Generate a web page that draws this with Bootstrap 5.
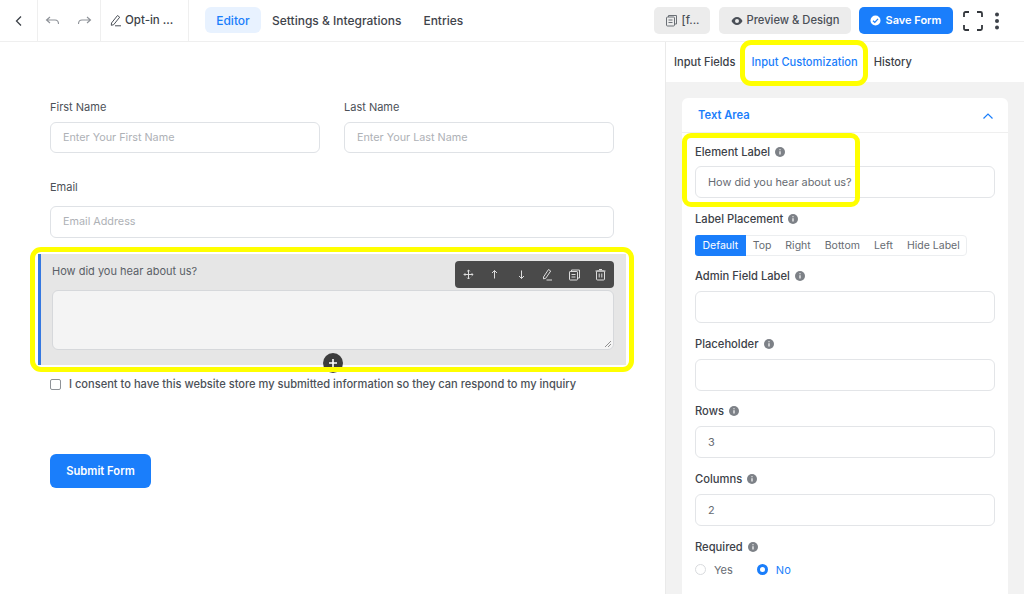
<!DOCTYPE html>
<html lang="en">
<head>
  <meta charset="UTF-8" />
  <meta name="viewport" content="width=device-width, initial-scale=1" />
  <title>Form Editor</title>
  <link href="https://cdn.jsdelivr.net/npm/bootstrap@5.3.0/dist/css/bootstrap.min.css" rel="stylesheet" />
  <style>
    html, body { height: 594px; overflow: hidden; }
    body { font-family: Inter, "Liberation Sans", sans-serif; font-size: 11px; color: #4a4f57; background: #fff; }
    svg { display: block; flex-shrink: 0; }
    .top-bar { height: 42px; border-bottom: 1px solid #efefef; }
    .top-cell { height: 41px; border-right: 1px solid #efefef; }
    .cell-back { width: 38px; }
    .cell-undo { width: 63px; gap: 17px; padding-left: 7px; }
    .cell-title { width: 88px; padding-left: 9px; gap: 3px; font-size: 11.5px; font-weight: 500; color: #3c4148; }
    .top-nav { margin-left: 16px; font-size: 12px; font-weight: 500; color: #3f444b; }
    .top-nav .nav-on { background: #e8f2ff; color: #1a7efb; border-radius: 6px; height: 26px; width: 56px; margin: -1px 11px 0 0; display: flex; align-items: center; justify-content: center; padding-top: 1px; }
    .top-nav .nav-mid { margin-right: 22px; }
    .top-right { gap: 9px; padding-right: 20px; }
    .grey-btn { height: 27px; background: #ececec; color: #4a4f57; border-radius: 5px; font-size: 11.2px; font-weight: 500; gap: 4px; }
    .btn-file { width: 56px; }
    .btn-prev { width: 132px; }
    .btn-save { width: 94px; height: 27px; background: #1a7efb; color: #fff; border-radius: 5px; font-size: 11px; font-weight: 600; gap: 4px; margin-left: -1px; }
    .btn-tools { margin-left: 1px; gap: 7px; }
    .pane-left { width: 665px; height: 552px; padding: 58px 51px 0 50px; }
    .pane-right { width: 359px; height: 552px; background: #f2f2f2; border-left: 1px solid #eaeaea; }
    .fld-label { font-size: 11px; color: #4c5158; line-height: 14px; margin-bottom: 8px; display: block; }
    .fld-input { height: 32px; border: 1px solid #dfe2e6; border-radius: 6px; padding: 0 12px; font-size: 10.8px; line-height: 30px; color: #aeb1b6; background: #fff; }
    .name-row { gap: 24px; margin-bottom: 27px; }
    .name-row > div { width: 270px; }
    .name-row .fld-input { height: 31px; }
    .email-row { margin-bottom: 16px; }
    .email-row .fld-label { margin-bottom: 12px; }
    .active-box { margin: 0 -12px 0 -12px; height: 111px; background: #e6e6e6; border-left: 3px solid #3578e0; padding: 10px 12px 0 11px; }
    .active-box .fld-label { color: #5a5f66; margin-bottom: 12px; }
    .area-box { height: 60px; background: #f4f4f4; border: 1px solid #d6d8db; border-radius: 6px; }
    .grip { right: 1px; bottom: 1px; }
    .tool-strip { top: 7px; right: 12px; width: 159px; height: 27px; background: #4a4a4a; border-radius: 4px; padding: 0 7px; }
    .add-dot { width: 20px; height: 20px; left: 282px; top: 99px; background: #3d3d3d; border-radius: 50%; z-index: 1; }
    .consent { margin-top: 12px; gap: 8px; font-size: 11.08px; line-height: 14px; color: #4c5158; font-weight: 500; }
    .tick-box { width: 11px; height: 11px; border: 1px solid #8e9297; border-radius: 2px; }
    .send-btn { margin-top: 63px; width: 101px; height: 34px; background: #1a7efb; color: #fff; font-size: 11.2px; font-weight: 600; border-radius: 6px; }
    .tab-row { height: 40px; background: #fff; gap: 16px; padding-left: 8px; font-size: 11.1px; font-weight: 500; color: #3c4148; }
    .tab-on { color: #1a7efb; }
    .set-card { margin: 16px 16px 0 16px; background: #fff; border-radius: 6px 6px 0 0; height: 500px; }
    .set-head { height: 35px; border-bottom: 1px solid #efefef; padding: 1px 14px 0 16px; color: #1a7efb; font-weight: 600; font-size: 11.2px; }
    .set-body { padding: 12px 13px 0 13px; }
    .set-label { font-size: 11.2px; font-weight: 500; color: #3c4148; line-height: 14px; margin-bottom: 8px; gap: 5px; }
    .set-first { margin-bottom: 7px; }
    .set-input { height: 32px; border: 1px solid #e3e5e8; border-radius: 6px; padding: 0 12px; font-size: 10.9px; line-height: 30px; color: #666b72; margin-bottom: 13.7px; background: #fff; white-space: nowrap; }
    .place-group { width: 272px; height: 21px; border: 1px solid #eceef0; border-radius: 4px; font-size: 10.5px; color: #666b72; margin-bottom: 13px; margin-top: 9.3px; white-space: nowrap; }
    .place-group span { padding: 0 7px; line-height: 19px; }
    .place-group .place-on { background: #1a7efb; color: #fff; border-radius: 3px 0 0 3px; margin: -1px 0 -1px -1px; line-height: 21px; padding: 0 7.500px; }
    .radio-row { gap: 24px; font-size: 11px; color: #666b72; margin-top: 8px; }
    .radio-off { width: 11px; height: 11px; border: 1px solid #d9dbde; border-radius: 50%; }
    .radio-on { width: 11px; height: 11px; border: 3.5px solid #1a7efb; border-radius: 50%; background: #fff; }
    .mark-line { border: 5px solid #ffff00; pointer-events: none; z-index: 5; }
    .mark-tab { left: 740px; top: 40px; width: 128px; height: 46px; border-radius: 11px; }
    .mark-label { left: 682px; top: 133px; width: 178px; height: 74px; border-radius: 9px; }
    .mark-area { left: 30px; top: 247px; width: 604px; height: 125px; border-radius: 11px; }
  </style>
</head>
<body>
  <header class="top-bar d-flex align-items-center">
    <div class="top-cell cell-back d-flex align-items-center justify-content-center">
      <svg width="12" height="12" viewBox="0 0 12 12" fill="none" stroke="#3c4148" stroke-width="1.3"><path d="M8 1.500 3.500 6 8 10.500"/></svg>
    </div>
    <div class="top-cell cell-undo d-flex align-items-center">
      <svg width="15" height="12" viewBox="0 0 15 12" fill="none" stroke="#8d9197" stroke-width="1.100"><path d="M5 2 1.500 5 5 8M1.500 5H10c2 0 3.500 1.300 3.500 4"/></svg>
      <svg width="15" height="12" viewBox="0 0 15 12" fill="none" stroke="#8d9197" stroke-width="1.100"><path d="M10 2l3.500 3L10 8M13.500 5H5C3 5 1.500 6.300 1.500 9"/></svg>
    </div>
    <div class="top-cell cell-title d-flex align-items-center">
      <svg width="12" height="13" viewBox="0 0 12 13" fill="none" stroke="#4a4f57" stroke-width="1"><path d="M1.500 9 7.500 1.500l2.200 1.700-6 7.500-2.400.6zM5 11.800h6"/></svg>
      <span>Opt-in ...</span>
    </div>
    <nav class="top-nav d-flex align-items-center">
      <span class="nav-on">Editor</span>
      <span class="nav-mid">Settings &amp; Integrations</span>
      <span>Entries</span>
    </nav>
    <div class="top-right ms-auto d-flex align-items-center">
      <div class="grey-btn btn-file d-flex align-items-center justify-content-center">
        <svg width="13" height="13" viewBox="0 0 13 13" fill="none" stroke="#6b7076" stroke-width="1"><rect x="1.500" y="3" width="8" height="9" rx="1"/><path d="M3.500 3V1.500h8v8.500H9.500M3.500 6h4M3.500 8.500h4"/></svg>
        <span>[f...</span>
      </div>
      <div class="grey-btn btn-prev d-flex align-items-center justify-content-center">
        <svg width="12" height="10" viewBox="0 0 12 10"><path fill="#4a4f57" fill-rule="evenodd" d="M6 1C3.500 1 1.500 3 .5 5c1 2 3 4 5.500 4s4.500-2 5.500-4c-1-2-3-4-5.500-4zm0 2a2 2 0 1 1 0 4 2 2 0 0 1 0-4z"/></svg>
        <span>Preview &amp; Design</span>
      </div>
      <div class="btn-save d-flex align-items-center justify-content-center">
        <svg width="11" height="11" viewBox="0 0 11 11"><circle cx="5.500" cy="5.500" r="5" fill="#fff"/><path d="M3 5.700 4.800 7.400 8 3.900" fill="none" stroke="#1a7efb" stroke-width="1.300"/></svg>
        <span>Save Form</span>
      </div>
      <div class="btn-tools d-flex align-items-center">
        <svg width="20" height="20" viewBox="0 0 20 20" fill="none" stroke="#33373c" stroke-width="1.800"><path d="M1 6V2.500A1.500 1.500 0 0 1 2.500 1H6M14 1h3.500A1.500 1.500 0 0 1 19 2.500V6M19 14v3.500a1.500 1.500 0 0 1-1.500 1.500H14M6 19H2.500A1.500 1.500 0 0 1 1 17.500V14"/></svg>
        <svg width="14" height="18" viewBox="0 0 14 18" fill="#3c4148"><circle cx="7" cy="2.500" r="2"/><circle cx="7" cy="9" r="2"/><circle cx="7" cy="15.500" r="2"/></svg>
      </div>
    </div>
  </header>

  <main class="d-flex">
    <section class="pane-left">
      <div class="name-row d-flex">
        <div>
          <label class="fld-label">First Name</label>
          <div class="fld-input">Enter Your First Name</div>
        </div>
        <div>
          <label class="fld-label">Last Name</label>
          <div class="fld-input">Enter Your Last Name</div>
        </div>
      </div>
      <div class="email-row">
        <label class="fld-label">Email</label>
        <div class="fld-input">Email Address</div>
      </div>
      <div class="active-box position-relative">
        <label class="fld-label">How did you hear about us?</label>
        <div class="area-box position-relative">
          <svg class="grip position-absolute" width="8" height="8" viewBox="0 0 8 8" fill="none" stroke="#777" stroke-width=".8"><path d="M1 7 7 1M4 7l3-3"/></svg>
        </div>
        <div class="tool-strip position-absolute d-flex align-items-center justify-content-between">
          <svg width="13" height="13" viewBox="0 0 13 13" fill="none" stroke="#dcdcdc" stroke-width="1"><path d="M6.500 2v9M2 6.500h9M5.200 3.300 6.500 2l1.300 1.300M5.200 9.700 6.500 11l1.300-1.300M3.300 5.200 2 6.500l1.300 1.300M9.700 5.200 11 6.500 9.700 7.800"/></svg>
          <svg width="13" height="13" viewBox="0 0 13 13" fill="none" stroke="#dcdcdc" stroke-width="1"><path d="M6.500 10.500v-8M4 5l2.500-2.500L9 5"/></svg>
          <svg width="13" height="13" viewBox="0 0 13 13" fill="none" stroke="#dcdcdc" stroke-width="1"><path d="M6.500 2.500v8M4 8l2.500 2.500L9 8"/></svg>
          <svg width="13" height="13" viewBox="0 0 13 13" fill="none" stroke="#dcdcdc" stroke-width="1"><path d="M2.500 9 7.500 1.500l2.200 1.500-5 7.300-2.200.6zM5.500 12H11"/></svg>
          <svg width="13" height="13" viewBox="0 0 13 13" fill="none" stroke="#dcdcdc" stroke-width="1"><rect x="1.500" y="3.500" width="8" height="8.500" rx=".6"/><path d="M3.500 3.500V2h8v8H9.500M3.500 6.500h4M3.500 9h4"/></svg>
          <svg width="13" height="13" viewBox="0 0 13 13" fill="none" stroke="#dcdcdc" stroke-width="1"><rect x="2.500" y="3" width="8" height="9" rx="1"/><path d="M1.500 3h10M5 1.500h3M5.200 5.500v4M7.800 5.500v4"/></svg>
        </div>
        <div class="add-dot position-absolute d-flex align-items-center justify-content-center">
          <svg width="10" height="10" viewBox="0 0 10 10" stroke="#fff" stroke-width="1.600"><path d="M5 1v8M1 5h8"/></svg>
        </div>
      </div>
      <div class="consent d-flex align-items-center">
        <span class="tick-box flex-shrink-0"></span>
        <span>I consent to have this website store my submitted information so they can respond to my inquiry</span>
      </div>
      <div class="send-btn d-flex align-items-center justify-content-center">Submit Form</div>
    </section>

    <aside class="pane-right">
      <div class="tab-row d-flex align-items-center">
        <span>Input Fields</span>
        <span class="tab-on">Input Customization</span>
        <span>History</span>
      </div>
      <div class="set-card">
        <div class="set-head d-flex align-items-center justify-content-between">
          <span>Text Area</span>
          <svg width="12" height="8" viewBox="0 0 12 8" fill="none" stroke="#1a7efb" stroke-width="1.200"><path d="M1.500 6.500 6 2l4.500 4.500"/></svg>
        </div>
        <div class="set-body">
          <div class="set-label set-first d-flex align-items-center">Element Label <svg width="10" height="10" viewBox="0 0 10 10"><circle cx="5" cy="5" r="5" fill="#7d8187"/><path d="M5 4.300v3.200M5 2.200v1.100" stroke="#fff" stroke-width="1.200"/></svg></div>
          <div class="set-input">How did you hear about us?</div>

          <div class="set-label d-flex align-items-center mb-0">Label Placement <svg width="10" height="10" viewBox="0 0 10 10"><circle cx="5" cy="5" r="5" fill="#7d8187"/><path d="M5 4.300v3.200M5 2.200v1.100" stroke="#fff" stroke-width="1.200"/></svg></div>
          <div class="place-group d-flex align-items-center">
            <span class="place-on">Default</span><span>Top</span><span>Right</span><span>Bottom</span><span>Left</span><span>Hide Label</span>
          </div>

          <div class="set-label d-flex align-items-center">Admin Field Label <svg width="10" height="10" viewBox="0 0 10 10"><circle cx="5" cy="5" r="5" fill="#7d8187"/><path d="M5 4.300v3.200M5 2.200v1.100" stroke="#fff" stroke-width="1.200"/></svg></div>
          <div class="set-input"></div>

          <div class="set-label d-flex align-items-center">Placeholder <svg width="10" height="10" viewBox="0 0 10 10"><circle cx="5" cy="5" r="5" fill="#7d8187"/><path d="M5 4.300v3.200M5 2.200v1.100" stroke="#fff" stroke-width="1.200"/></svg></div>
          <div class="set-input"></div>

          <div class="set-label d-flex align-items-center">Rows <svg width="10" height="10" viewBox="0 0 10 10"><circle cx="5" cy="5" r="5" fill="#7d8187"/><path d="M5 4.300v3.200M5 2.200v1.100" stroke="#fff" stroke-width="1.200"/></svg></div>
          <div class="set-input">3</div>

          <div class="set-label d-flex align-items-center">Columns <svg width="10" height="10" viewBox="0 0 10 10"><circle cx="5" cy="5" r="5" fill="#7d8187"/><path d="M5 4.300v3.200M5 2.200v1.100" stroke="#fff" stroke-width="1.200"/></svg></div>
          <div class="set-input">2</div>

          <div class="set-label d-flex align-items-center mb-0">Required <svg width="10" height="10" viewBox="0 0 10 10"><circle cx="5" cy="5" r="5" fill="#7d8187"/><path d="M5 4.300v3.200M5 2.200v1.100" stroke="#fff" stroke-width="1.200"/></svg></div>
          <div class="radio-row d-flex align-items-center">
            <div class="d-flex align-items-center gap-2"><span class="radio-off"></span><span>Yes</span></div>
            <div class="d-flex align-items-center gap-2 tab-on"><span class="radio-on"></span><span>No</span></div>
          </div>
        </div>
      </div>
    </aside>
  </main>

  <div class="mark-line mark-tab position-absolute"></div>
  <div class="mark-line mark-label position-absolute"></div>
  <div class="mark-line mark-area position-absolute"></div>

  <script src="https://cdn.jsdelivr.net/npm/bootstrap@5.3.0/dist/js/bootstrap.bundle.min.js"></script>
</body>
</html>
